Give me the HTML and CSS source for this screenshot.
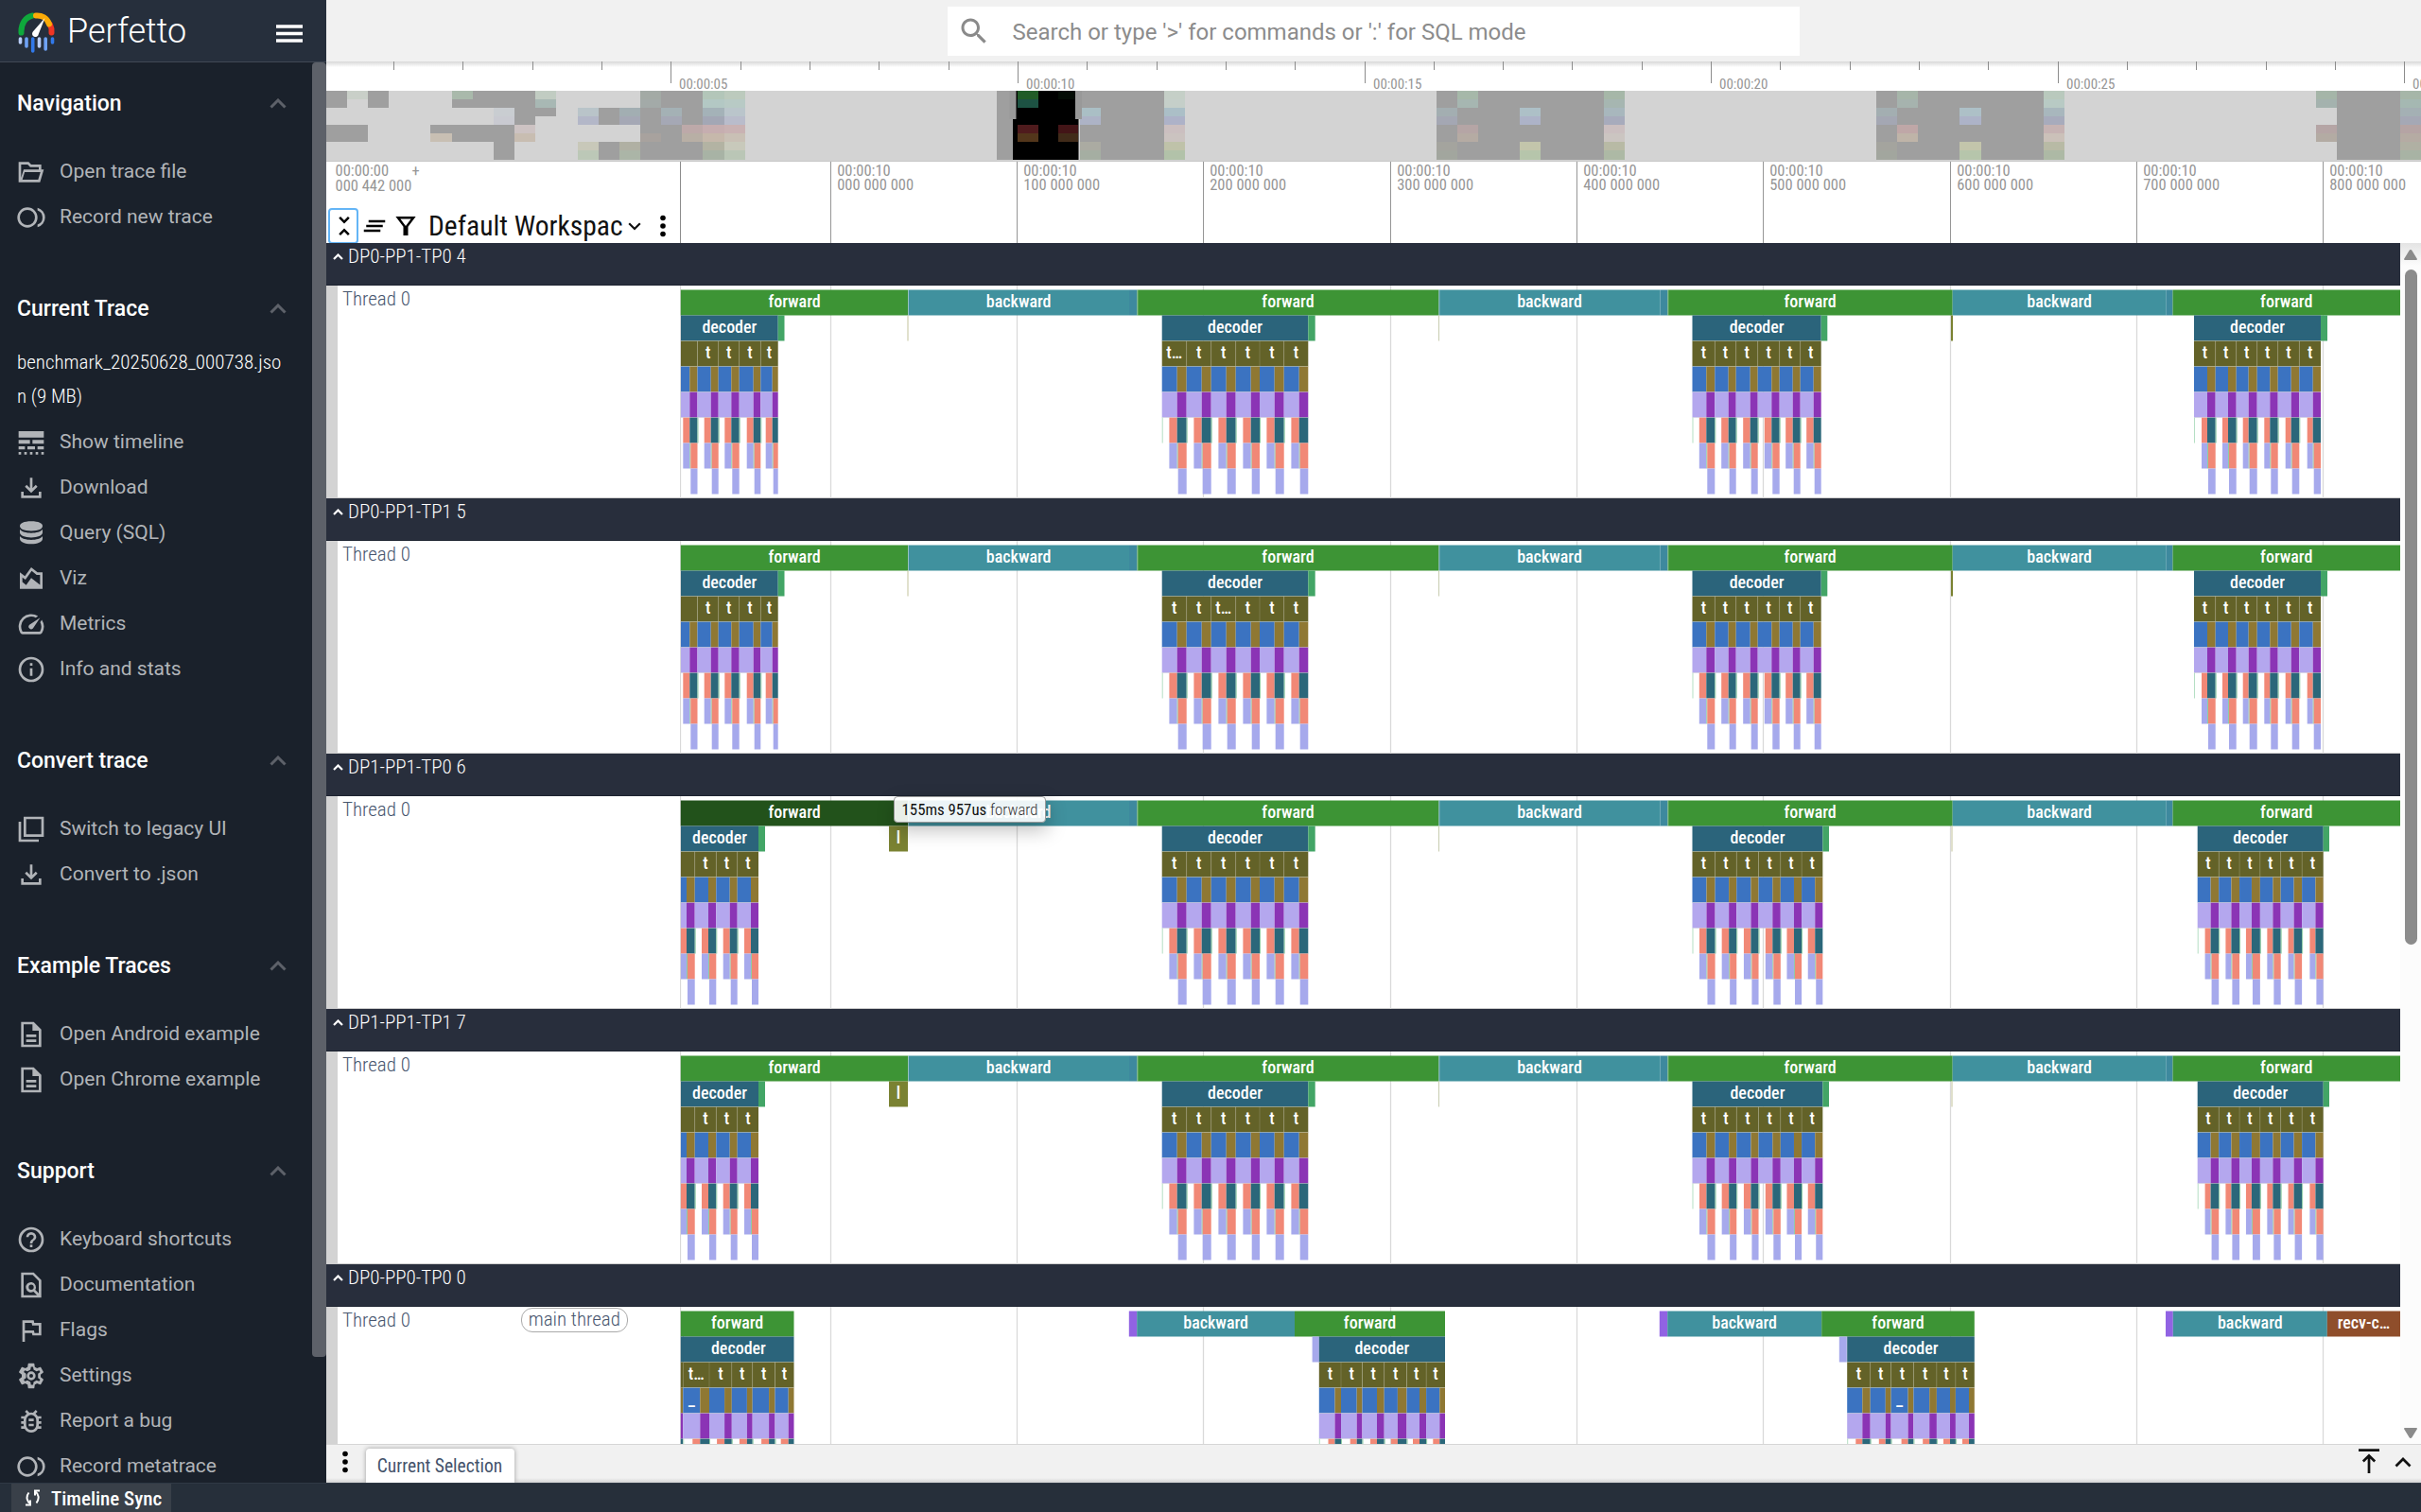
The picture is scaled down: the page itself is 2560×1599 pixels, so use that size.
FILE: index.html
```html
<!DOCTYPE html>
<html lang="en">
<head>
<meta charset="utf-8">
<title>Perfetto UI</title>
<link rel="stylesheet" href="styles.css">
</head>
<body>
<div class="app">
  <nav class="sidebar">
    <header class="brand">
      <svg class="logo" viewBox="0 0 40 44" width="40" height="44">
        <path d="M3.500 21.500C3 12 8 5 15.500 3.500" stroke="#0fa83c" stroke-width="6" fill="none" stroke-linecap="round"/>
        <path d="M35.500 21.500C35.800 18 35 15 34 13" stroke="#ee3524" stroke-width="6" fill="none" stroke-linecap="round"/>
        <path d="M19 3.500C25 3 31 6 33 12.500" stroke="#fbab07" stroke-width="6" fill="none" stroke-linecap="round"/>
        <path d="M28.500 6L15.800 20.500a3.400 3.400 0 1 0 6 2.400z" fill="#fff"/>
        <g stroke-width="3.600" stroke-linecap="round">
          <path d="M2.500 28v4" stroke="#b8cdf8"/><path d="M9 28v8" stroke="#6ea2f5"/>
          <path d="M15.700 28v13" stroke="#3179ea"/><path d="M22.500 28v8" stroke="#b8cdf8"/>
          <path d="M29.200 28v11" stroke="#6ea2f5"/><path d="M36.500 28v4" stroke="#3179ea"/>
        </g>
      </svg>
      <span class="brand-name">Perfetto</span>
      <svg class="burger" viewBox="0 0 28 20" width="28" height="20"><path d="M0 2h28M0 9.500h28M0 17h28" stroke="#fff" stroke-width="3.400"/></svg>
    </header>
    <div class="menu" id="menu"></div>
    <div class="menu-thumb"></div>
  </nav>

  <main class="page">
    <div class="topbar">
      <div class="search">
        <svg viewBox="0 0 24 24" width="36" height="36"><path fill="#8a8a8a" d="M15.500 14h-.79l-.28-.27C15.410 12.590 16 11.110 16 9.500 16 5.910 13.090 3 9.500 3S3 5.910 3 9.500 5.910 16 9.500 16c1.610 0 3.090-.59 4.230-1.570l.27.28v.79l5 4.990L20.490 19l-4.990-5zm-6 0C7.010 14 5 11.990 5 9.500S7.010 5 9.500 5 14 7.010 14 9.500 11.990 14 9.500 14z"/></svg>
        <span>Search or type '&gt;' for commands or ':' for SQL mode</span>
      </div>
    </div>
    <svg class="overview-axis" id="overviewAxis" width="2215" height="31" viewBox="345 65 2215 31"></svg>
    <svg class="minimap" id="minimap" width="2215" height="75" viewBox="345 96 2215 75"></svg>
    <div class="ruler">
      <div class="ruler-panel">
        <div class="origin"><div>00:00:00<br>000 442 000</div><span>+</span></div>
        <div class="tools">
          <button class="fold"><svg viewBox="0 0 24 24" width="30" height="30"><path d="M7.410 18.590L8.830 20 12 16.830 15.170 20l1.410-1.410L12 14l-4.590 4.590zm9.180-13.180L15.170 4 12 7.170 8.830 4 7.410 5.410 12 10l4.590-4.590z"/></svg></button>
          <svg class="tool-clear" viewBox="0 0 24 24" width="30" height="30"><path d="M5 13h14v-2H5v2zm-2 4h14v-2H3v2zM7 7v2h14V7H7z"/></svg>
          <svg class="tool-filter" viewBox="0 0 24 24" width="30" height="30"><path d="M3.500 4l6.500 8.600V20h4v-7.400L20.500 4zM7.500 6h9L12 12z" fill-rule="evenodd"/></svg>
          <span class="workspace">Default Workspace</span>
          <svg class="tool-down" viewBox="0 0 14 9" width="14" height="9"><path d="M1.200 1.200L7 7l5.800-5.800" fill="none" stroke="#111" stroke-width="2.200"/></svg>
          <svg class="tool-more" viewBox="0 0 6 24" width="6" height="24"><circle cx="3" cy="3.500" r="2.800"/><circle cx="3" cy="12" r="2.800"/><circle cx="3" cy="20.500" r="2.800"/></svg>
        </div>
      </div>
      <svg id="ruler" width="1841" height="86" viewBox="719 171 1841 86"></svg>
    </div>
    <div class="viewport">
      <div class="tracks" id="tracks"></div>
      <div class="scroller">
        <svg viewBox="0 0 14 11" width="14" height="11"><path d="M7 0q1 0 1.500 1L14 10q0 1-1 1H1q-1 0-1-1L5.500 1Q6 0 7 0z" fill="#8b8b8b"/></svg>
        <div class="scroller-thumb"></div>
        <svg class="scroller-down" viewBox="0 0 14 11" width="14" height="11"><path d="M7 11q1 0 1.500-1L14 1q0-1-1-1H1Q0 0 0 1l5.500 9q.5 1 1.500 1z" fill="#8b8b8b"/></svg>
      </div>
    </div>
    <div class="drawer">
      <svg class="drawer-more" viewBox="0 0 6 24" width="6" height="24"><circle cx="3" cy="3.500" r="2.800"/><circle cx="3" cy="12" r="2.800"/><circle cx="3" cy="20.500" r="2.800"/></svg>
      <div class="tab">Current Selection</div>
      <svg class="drawer-top" viewBox="0 0 22 26" width="22" height="26"><path d="M0 1.600h22M11 7v19M4.800 13.500L11 7.300l6.200 6.200" fill="none" stroke="#111" stroke-width="2.700"/></svg>
      <svg class="drawer-up" viewBox="0 0 18 11" width="18" height="11"><path d="M1.500 9.500L9 2l7.500 7.500" fill="none" stroke="#111" stroke-width="2.700"/></svg>
    </div>
    <div class="tooltip"><b>155ms 957us</b> forward</div>
  </main>

  <footer class="status">
    <div class="sync">
      <svg viewBox="0 0 15 18" width="15" height="18"><g fill="none" stroke="#fff" stroke-width="2"><path d="M5.500 15.500C1.500 13 0 8 3.500 3.500"/><path d="M15 1.500h-5v5"/><path d="M10 2C14 5 15 10 11.500 14.500"/><path d="M0 16.500h5v-5"/></g></svg>
      <span>Timeline Sync</span>
    </div>
  </footer>
</div>
<script src="app.js"></script>
</body>
</html>
```
FILE: styles.css
```css
* { box-sizing: border-box; }
body { margin: 0; background: #fff; font-family: Roboto, "Liberation Sans", sans-serif; overflow: hidden; }
svg { display: block; flex: none; }
.app { display: grid; grid-template: 1568px 31px / 345px 2215px; width: 2560px; height: 1599px; }

.sidebar { position: relative; background: #1a212b; overflow: hidden; display: flex; flex-direction: column; }
.brand { flex: none; height: 66px; background: #262f3c; border-bottom: 1px solid #404854; display: flex; align-items: center; padding: 0 25px 2px 19px; }
.logo { margin-top: 6px; }
.brand-name { flex: 1; padding: 2px 0 0 12px; color: #fff; font-size: 36px; font-weight: 300; }
.burger { margin-top: 8px; }
.menu { flex: 1; padding-left: 18px; overflow: hidden; }
.menu-thumb { position: absolute; right: 0; top: 66px; width: 15px; height: 1369px; background: #5d6169; border-radius: 4px; }
.section { margin-top: 49px; }
.section:first-child { margin-top: 19px; }
.section-head { display: flex; align-items: center; justify-content: space-between; height: 48px; margin-bottom: 24px; padding-right: 42px; color: #fff; font-size: 23px; font-weight: 500; }
.trace-name { margin: -9px 30px 6px 0; width: 282px; color: #fff; font: 300 21px/36px "Roboto Condensed", Roboto, sans-serif; word-break: break-all; }
.item { display: flex; align-items: center; height: 48px; gap: 14px; color: #b1b4b8; font-size: 21px; }
.item svg { fill: #b1b4b8; margin-left: -1px; margin-top: 2px; }

.page { position: relative; display: flex; flex-direction: column; background: #fff; overflow: hidden; }
.topbar { height: 65px; flex: none; background: #f1f1f1; display: flex; justify-content: center; padding-top: 7px; }
.search { width: 901px; height: 52px; margin-right: 1px; background: #fff; display: flex; align-items: center; gap: 23px; padding-left: 10px; color: #8c8c8c; font-size: 24px; }
.search span { padding-top: 2px; }
.overview-axis { background: linear-gradient(#d8d8d8, #fff 6px); }
.axis-label { font-family: "Roboto Condensed", Roboto, sans-serif; fill: #969696; }
.ruler { display: flex; height: 86px; flex: none; }
.ruler-panel { width: 374px; }
.origin { display: flex; height: 49px; padding: 2px 0 0 9.500px; color: #969696; font: 400 16.500px/15.500px "Roboto Condensed", Roboto, sans-serif; }
.tools { display: flex; align-items: center; height: 37px; }
.fold { width: 32px; height: 38px; margin: 0 2px; padding: 0; border: 2px solid #64b5f6; border-radius: 4px; background: #fff; display: grid; place-items: center; }
.tool-clear { margin-right: 3px; }
.workspace { width: 206px; margin-left: 9px; overflow: hidden; white-space: nowrap; color: #111; font: 400 29.500px/36px "Roboto Condensed", Roboto, sans-serif; }
.tool-down { margin: 2px 20px 0 5px; }

.viewport { display: flex; height: 1270px; flex: none; }
.tracks { width: 2193px; overflow: hidden; }
.group-head { position: relative; height: 45px; background: #282e3c; color: #fff; display: flex; gap: 5px; padding: 3px 0 0 7px; font: 300 21px/23px "Roboto Condensed", Roboto, sans-serif; border-bottom: 1px solid #1d2330; }
.group-head svg { margin-top: 8px; }
.track { display: flex; height: 225px; border-bottom: 1px solid #cfcfcf; }
.shell { width: 374px; border-left: 12px solid #d3d3d3; padding: 2px 55px 0 5px; display: flex; justify-content: space-between; align-items: flex-start; color: #48566e; font: 300 21px/25px "Roboto Condensed", Roboto, sans-serif; }
.chip { height: 26px; line-height: 23px; margin-top: -1px; padding: 0 7px; border: 1px solid #aaa; border-radius: 12px; }
.slice-label { font: 500 18px "Roboto Condensed", Roboto, sans-serif; fill: #fff; text-anchor: middle; }
.scroller { width: 22px; background: linear-gradient(#e4e4e4, #fcfcfc 24px); display: flex; flex-direction: column; align-items: center; padding: 7px 0 6px; }
.scroller-thumb { width: 13px; height: 714px; margin-top: 10px; border-radius: 7px; background: #8b8b8b; }
.scroller-down { margin-top: auto; }

.drawer { height: 41px; flex: none; border-top: 1px solid #d6d6d6; background: linear-gradient(#f1f1f1 35px, #d4d4d4); display: flex; padding-left: 17px; }
.drawer-more { margin-top: 6px; }
.tab { width: 157px; margin: 4px auto 0 19px; padding-right: 1px; background: #fff; border-radius: 4px 4px 0 0; box-shadow: 0 0 5px #999; color: #45536b; text-align: center; font: 400 19.500px/37px "Roboto Condensed", Roboto, sans-serif; }
.drawer-top { margin: 4px 16px 0 0; }
.drawer-up { margin: 13px 10px 0 0; }
.tooltip { position: absolute; left: 600px; top: 842px; width: 161px; height: 28px; background: rgba(255,255,255,.9); border: 1px solid #999; border-radius: 4px; box-shadow: 2px 8px 20px rgba(0,0,0,.25); color: #333; text-align: center; white-space: nowrap; font: 300 16.800px/26px "Roboto Condensed", Roboto, sans-serif; }
.tooltip b { font-weight: 400; color: #111; }

.status { grid-column: 1 / -1; background: #262f3a; border-top: 1px solid #2f3945; padding-left: 12px; }
.sync { width: 169px; height: 30px; background: #394049; display: flex; align-items: center; gap: 12px; padding-left: 15px; color: #fff; font: 500 21px/30px "Roboto Condensed", Roboto, sans-serif; white-space: nowrap; }
.sync span { padding-top: 2px; }
```
FILE: app.js
```js
// Sidebar -------------------------------------------------------------
const ICONS = {
  folder: 'M20 6h-8l-2-2H2v16h17l3-10h-2zM4 6h5.200l2 2H18v2H6L4 16.500zM17.500 18H5l1.800-6h12.500z',
  record: 'M9 4a8 8 0 1 0 0 16A8 8 0 0 0 9 4zm0 2a6 6 0 1 1 0 12A6 6 0 0 1 9 6zm8-1.740v2.090a6 6 0 0 1 0 11.300v2.090a8 8 0 0 0 0-15.480z',
  timeline: 'M2 3h20v5H2zM2 10h9v3H2zM13 10h9v3h-9zM2 15h5v2.500H2zM9 15h6v2.500H9zM17 15h5v2.500h-5zM2 19.500h2v2H2zM6.500 19.500h2v2h-2zM11 19.500h2v2h-2zM15.500 19.500h2v2h-2zM20 19.500h2v2h-2z',
  download: 'M18 15v3H6v-3H4v5h16v-5zM17 11l-1.410-1.410L13 12.170V4h-2v8.170L8.410 9.590 7 11l5 5z',
  database: 'M12 2.500c6 0 9 1.600 9 3.700s-3 3.900-9 3.900-9-1.800-9-3.900 3-3.700 9-3.700zM3 8.900c1.500 2 5 2.900 9 2.900s7.500-.9 9-2.900v2.600c0 2.200-4 3.900-9 3.900s-9-1.700-9-3.900zM3 14.300c1.500 2 5 2.900 9 2.900s7.500-.9 9-2.900v2c0 2.600-4 4.200-9 4.200s-9-1.600-9-4.200z',
  viz: 'M17 7l-5-4-5 7-4-3v13h18V7h-4zm2 9.950l-7-5.450L8 17l-3-2.400V11l2.440 1.830 4.960-6.950L16.300 9H19v7.950z',
  metrics: 'M20.380 8.570l-1.230 1.850a8 8 0 0 1-.22 7.580H5.070A8 8 0 0 1 15.580 6.850l1.850-1.230A10 10 0 0 0 3.350 19a2 2 0 0 0 1.720 1h13.850a2 2 0 0 0 1.740-1 10 10 0 0 0-.27-10.440zm-9.790 6.840a2 2 0 0 0 2.830 0l5.660-8.490-8.490 5.660a2 2 0 0 0 0 2.830z',
  info: 'M11 7h2v2h-2zm0 4h2v6h-2zm1-9a10 10 0 1 0 0 20 10 10 0 0 0 0-20zm0 18a8 8 0 1 1 0-16 8 8 0 0 1 0 16z',
  windows: 'M6 2v16h16V2zm14 14H8V4h12zM2 6h2v14h14v2H2z',
  doc: 'M4 2h10l6 6v14H4zM6 4v16h12V9h-5V4zM8 12h8v2H8zM8 16h8v2H8z',
  help: 'M11 18h2v-2h-2v2zm1-16a10 10 0 1 0 0 20 10 10 0 0 0 0-20zm0 18a8 8 0 1 1 0-16 8 8 0 0 1 0 16zm0-14a4 4 0 0 0-4 4h2a2 2 0 1 1 4 0c0 2-3 1.750-3 5h2c0-2.250 3-2.500 3-5a4 4 0 0 0-4-4z',
  find: 'M4 2h10l6 6v14H4zM6 4v16h10.600l-2.800-2.800a4 4 0 1 1 1.400-1.400L18 18.600V8.800L13.200 4zm6 7.700a2 2 0 1 0 0 4 2 2 0 0 0 0-4z',
  flag: 'M5 4v17h2v-7h5.600l.4 2h7V6h-5.600L14 4zm2 2h5.400l.4 2H18v6h-3.400l-.4-2H7z',
  gear: 'M19.430 12.980c.04-.32.07-.64.07-.98s-.03-.66-.07-.98l2.110-1.650c.19-.15.24-.42.12-.64l-2-3.460c-.12-.22-.39-.3-.61-.22l-2.490 1c-.52-.4-1.080-.73-1.690-.98l-.38-2.650A.49.49 0 0 0 14 2h-4c-.25 0-.46.18-.49.42l-.38 2.650c-.61.25-1.170.59-1.690.98l-2.490-1c-.23-.09-.49 0-.61.22l-2 3.460c-.13.22-.07.49.12.64l2.110 1.650c-.04.32-.07.65-.07.98s.03.66.07.98l-2.110 1.650c-.19.15-.24.42-.12.64l2 3.460c.12.22.39.3.61.22l2.490-1c.52.4 1.080.73 1.690.98l.38 2.650c.03.24.24.42.49.42h4c.25 0 .46-.18.49-.42l.38-2.650c.61-.25 1.170-.59 1.690-.98l2.490 1c.23.09.49 0 .61-.22l2-3.460c.12-.22.07-.49-.12-.64zM17.400 13.600l1.700 1.400-.8 1.400-2.100-.8-2.300 1.300-.4 2.200h-1.700l-.4-2.200-2.300-1.300-2.200.8-.8-1.400 1.800-1.400v-3.200L6.100 9l.8-1.400 2.200.8 2.300-1.300.4-2.200h1.700l.4 2.200 2.300 1.300 2.100-.8.800 1.400-1.700 1.400zM12 8.500a3.500 3.500 0 1 0 0 7 3.500 3.500 0 0 0 0-7zm0 2a1.500 1.500 0 1 1 0 3 1.500 1.500 0 0 1 0-3z',
  bug: 'M20 8h-2.810a6 6 0 0 0-1.820-1.960L17 4.410 15.590 3l-2.170 2.170a6 6 0 0 0-2.830 0L8.410 3 7 4.410l1.620 1.630C7.880 6.550 7.260 7.220 6.810 8H4v2h2.090c-.05.33-.09.66-.09 1v1H4v2h2v1c0 .34.04.67.09 1H4v2h2.810a6 6 0 0 0 10.380 0H20v-2h-2.090c.05-.33.09-.66.09-1v-1h2v-2h-2v-1c0-.34-.04-.67-.09-1H20zm-4 7a4 4 0 0 1-8 0v-4a4 4 0 0 1 8 0zm-6-5h4v2h-4zm0 4h4v2h-4z',
};
const MENU = [
  ['Navigation', ['folder', 'Open trace file'], ['record', 'Record new trace']],
  ['Current Trace', ['timeline', 'Show timeline'], ['download', 'Download'], ['database', 'Query (SQL)'], ['viz', 'Viz'], ['metrics', 'Metrics'], ['info', 'Info and stats']],
  ['Convert trace', ['windows', 'Switch to legacy UI'], ['download', 'Convert to .json']],
  ['Example Traces', ['doc', 'Open Android example'], ['doc', 'Open Chrome example']],
  ['Support', ['help', 'Keyboard shortcuts'], ['find', 'Documentation'], ['flag', 'Flags'], ['gear', 'Settings'], ['bug', 'Report a bug'], ['record', 'Record metatrace']],
];
document.getElementById('menu').innerHTML = MENU.map(([title, ...items]) =>
  `<section class="section"><div class="section-head"><span>${title}</span>
   <svg viewBox="0 0 18 11" width="18" height="11"><path d="M1.500 9.500L9 2l7.500 7.500" fill="none" stroke="#5d6169" stroke-width="3"/></svg></div>` +
  (title === 'Current Trace' ? '<div class="trace-name">benchmark_20250628_000738.json (9 MB)</div>' : '') +
  items.map(([icon, label]) => `<div class="item"><svg viewBox="0 0 24 24" width="32" height="32"><path fill-rule="evenodd" d="${ICONS[icon]}"/></svg><span>${label}</span></div>`).join('') +
  '</section>').join('');

// Overview axis ---------------------------------------------------------
const line = (x, y1, y2, c, w = 1) => `<path d="M${x} ${y1}V${y2}" stroke="${c}" stroke-width="${w}"/>`;
const label = (x, y, s, t) => `<text class="axis-label" x="${x}" y="${y}" font-size="${s}">${t}</text>`;
let axis = '';
for (let i = -4; i <= 25; i++) {
  const x = Math.floor(709.8 + i * 73.32) + .5;
  axis += line(x, 65, i % 5 ? 74 : 88, '#8c8c8c');
  if (i % 5 === 0) axis += label(x + 8.5, 93.5, 15, '00:00:' + String(5 + i).padStart(2, '0'));
}
document.getElementById('overviewAxis').innerHTML = axis;

// Minimap: [column, span, first row, row count, colour] ------------------
const D = '#9f9f9f';
const col = (k, ...colors) => colors.map((c, r) => c && [k, 1, r, 1, c]).filter(Boolean);
const cells = [
  [0,1,0,2,D],[0,2,4,2,D],[1,1,0,1,'#c9cfc8'],[2,1,0,2,D],
  [5,4,4,1,D],[5,1,5,1,'#c8bfb3'],[6,3,5,1,D],[6,1,0,1,'#a9b9ab'],[7,3,0,1,D],[6,4,1,1,D],
  [8,1,2,1,'#c9cdd1'],[8,1,3,1,'#c9cad1'],[8,1,6,2,D],[9,1,2,2,D],[10,1,2,1,D],[9,1,4,1,'#cdc3c3'],[9,1,5,1,'#c8bdb1'],
  [10,1,0,1,'#c1ccc2'],[10,1,1,1,'#a8b8b4'],
  ...col(12,0,0,'#b9c4c9','#b3b7c8',0,0,'#c8c8b9','#bcc8b7'),
  [13,1,2,2,D],[13,1,6,2,D],
  ...col(14,0,0,'#a2aeb2','#a5a8b5',0,0,'#b0b0a3','#abb5a7'),
  ...col(15,'#a3aaa5','#a3aaa8',D,D,D,'#a8a29e',D,D),
  ...col(16,D,D,'#a4b1b5','#a5a8b5',D,D,D,D),
  ...col(17,D,D,D,D,'#bda9a9','#b8afa5',D,D),
  ...col(18,'#b3c6b9','#b3c8c4','#a4b2b8','#a3a7b5','#c6aeb0','#c6b8ab','#b3b3a3','#a8b3a5'),
  ...col(19,'#bccabd','#b8cac5','#bac5cb','#b9bccb','#c9b2b3','#c9c0b5','#c8c9bb','#bac6b6'),
  [32,1,0,8,D],
  ...col(36,D,D,'#aabfc5','#adb3c6',D,D,'#ababa2','#a5aea2'),[37,3,0,8,D],
  ...col(40,'#c5cfc7','#c5cfc9','#abbfc7','#adb2c8','#cbbfc0','#cbc3c0','#bfc2a9','#b2c2a9'),
  [53,8,0,8,D],
  ...col(53,0,0,'#a3aeb1','#a4a7b3',0,0,'#a4a49e','#a2a69e'),
  ...col(54,'#a6b8a9','#a6b6b1',0,0,'#b5a5a5','#b5aba3'),
  ...col(57,0,0,'#adc0c7','#adb3c8',0,0,'#c3c5ab','#b6c5ab'),
  ...col(61,'#a6b7a8','#a6b6b1','#a8b7bd','#a7abbc','#cbbfc0','#cbc5c1','#b8baa5','#adb9a5'),
  [74,8,0,8,D],
  ...col(74,0,0,'#a3aeb1','#a4a7b3',0,0,'#a4a49e','#a2a69e'),
  ...col(75,'#a6b5a9','#a6b3ae',0,0,'#bfa7a7','#bfb4a8'),
  ...col(78,0,0,'#adc0c7','#adb3c8',0,0,'#c3c5ab','#b6c5ab'),
  ...col(82,'#b9c9bd','#b8cac4','#a8b7bd','#a7abbc','#c6b3b3','#cbc1b9','#b8baa5','#adb9a5'),
  ...col(95,'#a5b5a8','#a4b2ae',0,0,'#b5a5a5','#b3aba3'),
  [96,3,0,8,D],
  ...col(99,'#a6b6a8','#a5b8b2','#a4b0b4','#a5a8b5','#b5a4a4','#b5aba3','#b0b0a3','#a8b3a4'),
];
const binX = k => Math.round(344.7 + 22.15 * k);
const bins = cs => cs.map(([k, n, r, m, c]) => `<rect x="${binX(k)}" y="${96 + r * 9}" width="${binX(k + n) - binX(k)}" height="${m * 9 + (r + m === 8 ? 1 : 0)}" fill="${c}"/>`).join('');
document.getElementById('minimap').innerHTML =
  '<rect x="345" y="96" width="2215" height="75" fill="#d3d3d3"/>' + bins(cells) +
  '<rect x="1071" y="96" width="69.500" height="73" fill="#000"/>' +
  bins([[33,1,0,1,'#215c27'],[33,1,1,1,'#1d5243'],[33,1,4,1,'#4f1b1d'],[33,1,5,1,'#53361b']]) +
  '<rect x="1119" y="96" width="18" height="9" fill="#040c05"/><rect x="1119" y="132" width="21" height="9" fill="#431517"/><rect x="1119" y="141" width="21" height="9" fill="#412b19"/>' +
  '<rect x="1067.500" y="96" width="7" height="30" fill="#999"/><rect x="1137" y="96" width="7" height="30" fill="#999"/>' +
  '<rect x="345" y="170" width="2215" height="1" fill="#c8c8c8"/>';

// Ruler -------------------------------------------------------------------
const TICKS = [878, 1075.3, 1272.6, 1470, 1667.2, 1864.7, 2062, 2259.2, 2456.3].map(x => Math.floor(x) + .5);
document.getElementById('ruler').innerHTML = line(719.5, 171, 257, '#8c8c8c') + TICKS.map((x, i) =>
  line(x, 171, 257, '#969696') + label(x + 6.7, 186, 16.5, '00:00:10') + label(x + 6.7, 201.3, 16.5, i + '00 000 000')).join('');

// Tracks --------------------------------------------------------------------
const C = { fwd: '#3d9435', hot: '#22521b', bwd: '#40919e', bwd2: '#3e899e', dec: '#2b647b', ok: '#43a566', t: '#636228', blue: '#3b73c1',
  brown: '#8f7833', lilac: '#b4a7ee', purple: '#8b34b5', coral: '#f18876', teal: '#2b677a', lav: '#a6a9ec', olive: '#7a8232', violet: '#9163e3', recv: '#8f4e2b' };
const slice = (row, a, b, color, text) => {
  const y = 4.5 + row * 27;
  return `<rect x="${a}" y="${y}" width="${b - a}" height="27" fill="${color}"/>` +
    (text ? `<text class="slice-label" x="${(a + b) / 2}" y="${y + 18.7}">${text}</text>` : '');
};
const sliver = (row, x, c = '#8fcba5') => slice(row, x, x + 1, c);
// edges: alternating cell start / split, closed by the final end
function cluster({ edges, w, tail, labels, lead = true, under = -1 }) {
  const a = edges[0], z = edges[edges.length - 1];
  let out = slice(1, a, z, C.dec, 'decoder') + (tail ? slice(1, z, tail, C.ok) : '');
  if (lead) out += sliver(5, a, '#b5dfc4');
  for (let i = 0; i + 2 < edges.length; i += 2) {
    const [s, m, e] = edges.slice(i, i + 3);
    const q = Math.max(s + (i ? 3 : 0), m - w), n = i / 2;
    out += slice(2, s, e, C.t, labels[n]) + (i ? `<rect x="${s - .5}" y="58.500" width="1" height="27" fill="#fff" opacity=".15"/>` : '');
    out += slice(3, s, m, C.blue, n === under ? '_' : '') + slice(3, m, e, C.brown);
    out += slice(4, s, m, C.lilac) + slice(4, m, e, C.purple);
    out += slice(5, q, m, C.coral) + slice(5, m, e, C.teal) + (e < z ? sliver(5, e) : '');
    out += slice(6, q, m, C.lav) + sliver(6, m) + slice(6, m + 1, e, C.coral) + slice(7, m + 1, e, C.lav);
  }
  for (let r = 2; r < 6; r++) out += `<rect x="${a}" y="${4 + r * 27}" width="${z - a}" height="1" fill="#cfd8c8" opacity=".3"/>`;
  return out;
}
const T = ['t','t','t','t','t','t'];
const c1 = [720,729.3,737.5,751.7,759.7,773.3,781.7,796.7,804.3,816.7,822.7];
const c1b = [720,726,734.7,749,757.3,771.7,779.7,794,802];
const c2 = [1228.7,1244.7,1254.7,1270.7,1280.7,1296.7,1306.7,1322.7,1332,1347.7,1357.7,1373.7,1383.3];
const c3 = [1789.5,1804.3,1813.3,1827.7,1835.7,1850.7,1858.7,1873.3,1881.7,1895.7,1903.7,1917.7,1925.7];
const c4 = [2320,2334,2342.7,2356,2364.7,2377.7,2386.7,2400.3,2408.7,2422.7,2431.3,2445.7,2454];
const base = first => slice(0,719.8,960.3,first,'forward') + slice(0,960.3,1194,C.bwd,'backward') + slice(0,1194,1202.5,C.bwd2) +
  slice(0,1202.5,1521.5,C.fwd,'forward') + slice(0,1521.5,1755.5,C.bwd,'backward') + slice(0,1755.5,1763.5,C.bwd2) +
  slice(0,1763.5,2064.7,C.fwd,'forward') + slice(0,2064.7,2290.7,C.bwd,'backward') + slice(0,2290.7,2297.5,C.bwd2) +
  slice(0,2297.5,2538,C.fwd,'forward') + sliver(1,1521,'#c8ccb0') +
  [960,1202.5,1521.5,1763.5].map(x => `<rect x="${x}" y="4.500" width="1" height="27" fill="#fff" opacity=".3"/>`).join('');
const pp1a = t2 => base(C.fwd) + sliver(1,959.5,'#c4c49c') + slice(1,2063,2065,C.olive) +
  cluster({ edges: c1, w: 7, tail: 829.5, labels: ['','t','t','t','t'], lead: false }) +
  cluster({ edges: c2, w: 8.3, tail: 1390.7, labels: t2 }) +
  cluster({ edges: c3, w: 7.5, tail: 1932.3, labels: T }) + cluster({ edges: c4, w: 6, tail: 2461, labels: T });
const pp1b = first => base(first) + slice(1,940,960,C.olive,'l') + sliver(1,2063.5,'#c4c49c') +
  cluster({ edges: c1b, w: 7, tail: 809, labels: ['','t','t','t'], lead: false }) +
  cluster({ edges: c2, w: 8.3, tail: 1390.7, labels: T }) +
  cluster({ edges: c3.map(x => x + (x - 1789.5) * .012), w: 7.5, tail: 1934, labels: T }) +
  cluster({ edges: c4.map(x => x + 3.7 - (x - 2320) * .008), w: 6, tail: 2463, labels: T });
const pp0 = slice(0,719.8,839.5,C.fwd,'forward') + slice(1,719.8,723,C.dec) + slice(2,719.8,722.3,C.t) + slice(3,719.8,722.3,C.brown) + slice(4,719.8,722.3,C.purple) + slice(5,719.8,722.3,C.teal) +
  cluster({ edges: [722.3,740.3,750,766.1,773.8,789.9,795.7,813.1,819.5,833.7,839.5], w: 8, labels: ['t…','t','t','t','t'], under: 0 }) +
  slice(0,1193.8,1202.2,C.violet) + slice(0,1202.2,1369,C.bwd,'backward') + slice(0,1369,1528,C.fwd,'forward') + slice(1,1387.6,1394.8,C.lav) +
  cluster({ edges: [1394.8,1411.5,1418,1434.7,1440.5,1456,1463.7,1477.9,1487.5,1501,1508.1,1522.3,1528], w: 7, labels: T }) +
  slice(0,1754.8,1763.2,C.violet) + slice(0,1763.2,1926.2,C.bwd,'backward') + slice(0,1926.2,2087.8,C.fwd,'forward') + slice(1,1944.8,1952.8,C.lav) +
  cluster({ edges: [1953.2,1969.3,1977.7,1993.8,1999.6,2017.6,2023.4,2040.2,2047.9,2062,2067.9,2082,2087.8], w: 7, labels: T, under: 2 }) +
  slice(0,2290,2297.8,C.violet) + slice(0,2297.8,2460.8,C.bwd,'backward') + slice(0,2460.8,2538,C.recv,'recv-c…');
const GROUPS = [
  ['DP0-PP1-TP0 4', pp1a(['t…','t','t','t','t','t'])],
  ['DP0-PP1-TP1 5', pp1a(['t','t','t…','t','t','t'])],
  ['DP1-PP1-TP0 6', pp1b(C.hot)],
  ['DP1-PP1-TP1 7', pp1b(C.fwd)],
  ['DP0-PP0-TP0 0', pp0, 'main thread'],
];
const grid = [719.5, ...TICKS].map(x => line(x, 0, 225, '#d9d9d9', 1.3)).join('');
document.getElementById('tracks').innerHTML = GROUPS.map(([name, body, chip]) => `
  <div class="group-head"><svg viewBox="0 0 11 7" width="11" height="7"><path d="M1 6l4.500-4.500L10 6" fill="none" stroke="#fff" stroke-width="2.200"/></svg><span>${name}</span></div>
  <div class="track"><div class="shell"><span>Thread 0</span>${chip ? `<span class="chip">${chip}</span>` : ''}</div>
  <svg width="1819" height="225" viewBox="719 0 1819 225">${grid}${body}</svg></div>`).join('');
```
